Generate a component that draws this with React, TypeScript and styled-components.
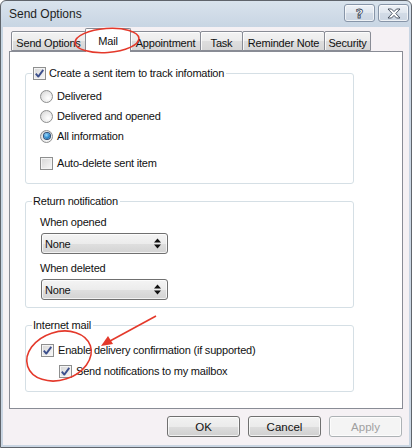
import React from "react";
import styled, { createGlobalStyle } from "styled-components";

const GlobalStyle = createGlobalStyle`
  html, body { margin: 0; padding: 0; background: #ffffff; }
  body {
    font-family: "Liberation Sans", Arial, sans-serif;
    font-size: 11px;
    color: #1a1a1a;
  }
  * { box-sizing: border-box; }
`;

const Window = styled.div`
  position: relative;
  width: 412px;
  height: 448px;
  border: 1px solid #5f646b;
  border-radius: 6px 6px 0 0;
  background: linear-gradient(#d9e3ed, #c8d5e3 26px, #c9d5e2);
  display: flex;
  flex-direction: column;
  padding: 0 2px 2px 2px;
`;

const TitleBar = styled.div`
  height: 26px;
  flex: none;
  display: flex;
  justify-content: space-between;
  padding-left: 6px;
`;

const Title = styled.span`
  font-size: 12px;
  line-height: 26px;
  color: #1e1e1e;
`;

const CaptionButtons = styled.div`
  display: flex;
  gap: 3px;
  margin-top: 3px;
`;

const CaptionButton = styled.div`
  width: 31px;
  height: 18px;
  border: 1px solid #8795a8;
  border-radius: 3px;
  background: linear-gradient(#eef2f7, #dfe6ee 50%, #d2dbe6 51%, #ccd6e2);
  box-shadow: inset 0 0 0 1px rgba(255, 255, 255, 0.65);
  display: flex;
  align-items: center;
  justify-content: center;
`;

const HelpGlyph = styled.span`
  font-family: "DejaVu Sans", sans-serif;
  font-weight: bold;
  font-size: 13px;
  line-height: 1;
  color: #ffffff;
  -webkit-text-stroke: 0.8px #3b4656;
`;

const Client = styled.div`
  flex: 1;
  background: #f5f1f4;
  display: flex;
  flex-direction: column;
  padding: 1px 6px 0 6px;
`;

const TabStrip = styled.div`
  height: 23px;
  flex: none;
  display: flex;
  align-items: flex-start;
  padding-left: 2px;
`;

const Tab = styled.div<{ $w: number; $active?: boolean }>`
  position: relative;
  width: ${(p) => p.$w}px;
  margin-right: -1px;
  margin-top: ${(p) => (p.$active ? 0 : 3)}px;
  height: ${(p) => (p.$active ? 24 : 20)}px;
  padding-top: ${(p) => (p.$active ? 5 : 4)}px;
  line-height: 14px;
  text-align: center;
  white-space: nowrap;
  border: 1px solid #898c95;
  border-bottom: ${(p) => (p.$active ? "none" : "1px solid #898c95")};
  border-radius: 2px 2px 0 0;
  background: ${(p) =>
    p.$active
      ? "#ffffff"
      : "linear-gradient(#f3f3f3, #ececec 50%, #dedede 51%, #d6d6d6)"};
  box-shadow: inset 1px 1px 0 rgba(255, 255, 255, 0.8);
  z-index: ${(p) => (p.$active ? 2 : 1)};
  letter-spacing: -0.2px;
  color: #111;
`;

const Panel = styled.div`
  height: 358px;
  flex: none;
  border: 1px solid #898c95;
  background: #ffffff;
  display: flex;
  flex-direction: column;
  padding: 0 0 0 15px;
`;

const Group = styled.fieldset<{ $top: number; $pb: number }>`
  width: 329px;
  margin: ${(p) => p.$top}px 0 0 0;
  padding: 0 0 ${(p) => p.$pb}px 0;
  border: 1px solid #d5dfe5;
  border-radius: 3px;
  min-width: 0;
`;

const Legend = styled.legend`
  margin-left: 6px;
  padding: 0 2px 0 1px;
  line-height: 15px;
  height: 15px;
  display: flex;
  align-items: center;
  gap: 3px;
  letter-spacing: -0.2px;
  color: #111;
`;

const GroupBody = styled.div<{ $pt: number; $indent: number }>`
  display: flex;
  flex-direction: column;
  padding: ${(p) => p.$pt}px 0 0 ${(p) => p.$indent}px;
`;

const OptionRow = styled.div<{ $gapTop?: number; $indent?: number }>`
  height: 20px;
  display: flex;
  align-items: center;
  gap: 4px;
  margin-top: ${(p) => p.$gapTop ?? 0}px;
  margin-left: ${(p) => p.$indent ?? 0}px;
  letter-spacing: -0.2px;
  white-space: nowrap;
  color: #111;
`;

const FieldLabel = styled.div<{ $gapTop: number }>`
  line-height: 14px;
  height: 14px;
  margin-top: ${(p) => p.$gapTop}px;
  letter-spacing: -0.2px;
  color: #111;
`;

const SelectBox = styled.div`
  width: 127px;
  height: 21px;
  margin: 4px 0 0 1px;
  border: 1px solid #707070;
  border-radius: 3px;
  background: linear-gradient(#f4f4f4, #ececec 50%, #dfdfdf 51%, #d3d3d3);
  box-shadow: inset 0 0 0 1px rgba(255, 255, 255, 0.7);
  display: flex;
  align-items: center;
  justify-content: space-between;
  padding: 0 6px 0 3px;
  letter-spacing: -0.2px;
  color: #111;
`;

const Box = styled.span`
  width: 13px;
  height: 13px;
  flex: none;
  border: 1px solid #8e8f8f;
  background: linear-gradient(135deg, #d6d6d6, #f8f8f8);
  box-shadow: inset 0 0 0 1px #f4f4f4;
  display: flex;
  align-items: center;
  justify-content: center;
`;

const RadioCircle = styled.span`
  width: 13px;
  height: 13px;
  flex: none;
  border: 1px solid #8e8f8f;
  border-radius: 50%;
  background: radial-gradient(circle at 65% 65%, #ffffff, #e8e8e8 55%, #cfcfcf);
  display: flex;
  align-items: center;
  justify-content: center;
`;

const RadioDot = styled.span`
  width: 6px;
  height: 6px;
  border-radius: 50%;
  background: radial-gradient(circle at 40% 35%, #9fdcff, #2a88cc 55%, #17497f);
  box-shadow: 0 0 0 1px #2d4f78;
`;

const ButtonRow = styled.div`
  display: flex;
  justify-content: flex-end;
  gap: 8px;
  margin-top: 7px;
  padding-right: 1px;
`;

const PushButton = styled.div<{ $disabled?: boolean }>`
  width: 73px;
  height: 21px;
  border: 1px solid ${(p) => (p.$disabled ? "#adb2b5" : "#707070")};
  border-radius: 3px;
  background: ${(p) =>
    p.$disabled
      ? "#f4f4f4"
      : "linear-gradient(#f2f2f2, #ebebeb 50%, #dddddd 51%, #cfcfcf)"};
  box-shadow: inset 0 0 0 1px rgba(255, 255, 255, 0.7);
  display: flex;
  align-items: center;
  justify-content: center;
  color: ${(p) => (p.$disabled ? "#a0a0a0" : "#111")};
  font-size: 11.5px;
`;

const Annotations = styled.svg`
  position: absolute;
  top: -1px;
  left: -1px;
  pointer-events: none;
  z-index: 10;
`;

const Check = () => (
  <svg width="9" height="9" viewBox="0 0 9 9">
    <path
      d="M0.8 4.6 L3.3 7.6 L8.3 0.9"
      fill="none"
      stroke="#3c4f8c"
      strokeWidth="1.9"
      strokeLinejoin="round"
    />
  </svg>
);

const Checkbox = ({ checked }: { checked?: boolean }) => (
  <Box>{checked && <Check />}</Box>
);

const Radio = ({ checked }: { checked?: boolean }) => (
  <RadioCircle>{checked && <RadioDot />}</RadioCircle>
);

const Select = ({ value }: { value: string }) => (
  <SelectBox>
    <span>{value}</span>
    <svg width="7" height="11" viewBox="0 0 7 11">
      <path d="M3.5 0.5 L7 4.5 L0 4.5 Z" fill="#111" />
      <path d="M0 6.5 L7 6.5 L3.5 10.5 Z" fill="#111" />
    </svg>
  </SelectBox>
);

const tabs = [
  { label: "Send Options", w: 75 },
  { label: "Mail", w: 46, active: true },
  { label: "Appointment", w: 71 },
  { label: "Task", w: 43 },
  { label: "Reminder Note", w: 83 },
  { label: "Security", w: 47 },
];

export default function App() {
  return (
    <>
      <GlobalStyle />
      <Window>
        <TitleBar>
          <Title>Send Options</Title>
          <CaptionButtons>
            <CaptionButton>
              <HelpGlyph>?</HelpGlyph>
            </CaptionButton>
            <CaptionButton>
              <svg width="14" height="11" viewBox="0 0 14 11">
                <path
                  d="M1 1 L4.5 1 L7 3.6 L9.5 1 L13 1 L8.8 5.5 L13 10 L9.5 10 L7 7.4 L4.5 10 L1 10 L5.2 5.5 Z"
                  fill="#ffffff"
                  stroke="#3b4656"
                  strokeWidth="0.9"
                  strokeLinejoin="round"
                />
              </svg>
            </CaptionButton>
          </CaptionButtons>
        </TitleBar>
        <Client>
          <TabStrip>
            {tabs.map((t) => (
              <Tab key={t.label} $w={t.w} $active={t.active}>
                {t.label}
              </Tab>
            ))}
          </TabStrip>
          <Panel>
            <Group $top={14} $pb={10}>
              <Legend>
                <Checkbox checked />
                <span>Create a sent item to track infomation</span>
              </Legend>
              <GroupBody $pt={5} $indent={14}>
                <OptionRow>
                  <Radio />
                  <span>Delivered</span>
                </OptionRow>
                <OptionRow>
                  <Radio />
                  <span>Delivered and opened</span>
                </OptionRow>
                <OptionRow>
                  <Radio checked />
                  <span>All information</span>
                </OptionRow>
                <OptionRow $gapTop={7}>
                  <Checkbox />
                  <span>Auto-delete sent item</span>
                </OptionRow>
              </GroupBody>
            </Group>
            <Group $top={10} $pb={7}>
              <Legend>
                <span>Return notification</span>
              </Legend>
              <GroupBody $pt={6} $indent={14}>
                <FieldLabel $gapTop={0}>When opened</FieldLabel>
                <Select value="None" />
                <FieldLabel $gapTop={7}>When deleted</FieldLabel>
                <Select value="None" />
              </GroupBody>
            </Group>
            <Group $top={10} $pb={10}>
              <Legend>
                <span>Internet mail</span>
              </Legend>
              <GroupBody $pt={7} $indent={15}>
                <OptionRow>
                  <Checkbox checked />
                  <span>Enable delivery confirmation (if supported)</span>
                </OptionRow>
                <OptionRow $gapTop={1} $indent={18}>
                  <Checkbox checked />
                  <span>Send notifications to my mailbox</span>
                </OptionRow>
              </GroupBody>
            </Group>
          </Panel>
          <ButtonRow>
            <PushButton>OK</PushButton>
            <PushButton>Cancel</PushButton>
            <PushButton $disabled>Apply</PushButton>
          </ButtonRow>
        </Client>
        <Annotations width="412" height="448" viewBox="0 0 412 448">
          <ellipse
            cx="107"
            cy="40.5"
            rx="32"
            ry="12"
            transform="rotate(-4 107 40.5)"
            fill="none"
            stroke="#e4392b"
            strokeWidth="1.6"
          />
          <ellipse
            cx="59"
            cy="356"
            rx="33"
            ry="24"
            transform="rotate(-18 59 356)"
            fill="none"
            stroke="#e4392b"
            strokeWidth="1.6"
          />
          <line
            x1="156"
            y1="316"
            x2="110"
            y2="341"
            stroke="#e4392b"
            strokeWidth="1.6"
          />
          <path d="M101 346 L108 336 L113 344 Z" fill="#e4392b" />
        </Annotations>
      </Window>
    </>
  );
}
